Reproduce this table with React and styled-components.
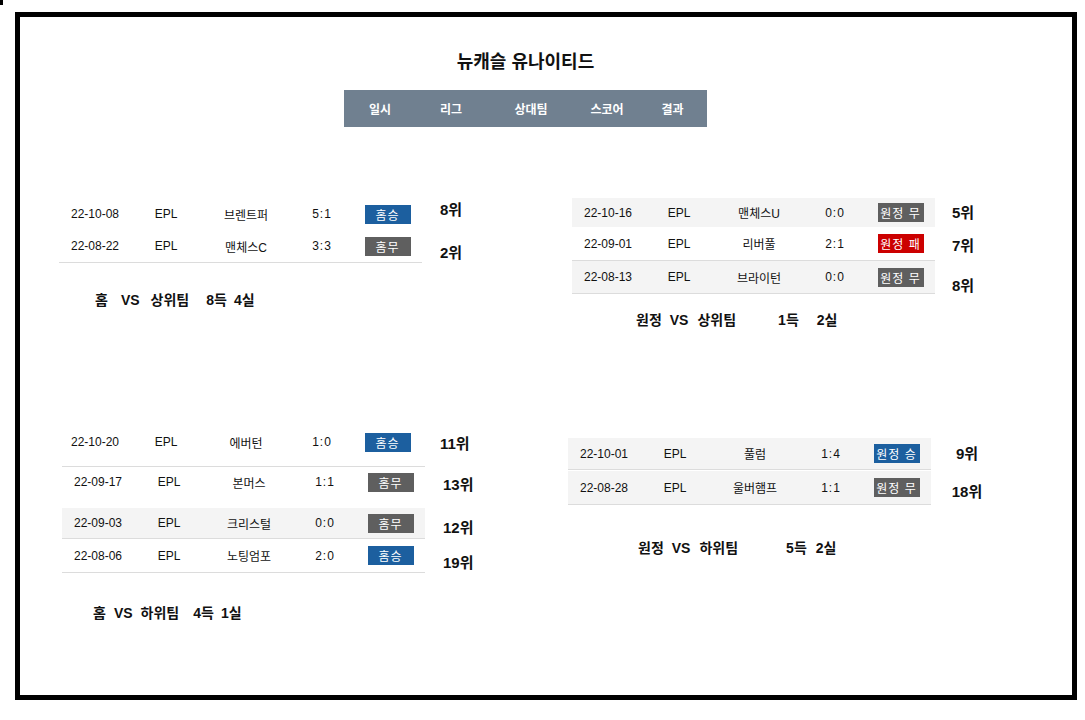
import styled, { createGlobalStyle } from "styled-components";

const GlobalStyle = createGlobalStyle`
    body {
        margin: 0;
        background: #fff;
        font-family: "Liberation Sans", "Noto Sans CJK KR", sans-serif;
        color: #111;
    }
`;

const COLS = "72px 70px 90px 62px 69px";

const Corner = styled.div`
    width: 3px;
    height: 5px;
    background: #000;
`;

const Frame = styled.div`
    box-sizing: border-box;
    width: 1062px;
    height: 688px;
    margin: 7px 0 0 15px;
    border: 5px solid #000;
`;

const Title = styled.h1`
    width: 363px;
    margin: 33px 0 0 324px;
    font-size: 18px;
    line-height: 24px;
    font-weight: 700;
    text-align: center;
`;

const HeaderBar = styled.div`
    display: grid;
    grid-template-columns: ${COLS};
    align-items: center;
    width: 363px;
    height: 37px;
    margin: 16px 0 0 324px;
    background: #708090;
    color: #fff;
    font-size: 12px;
    font-weight: 700;
    text-align: center;
`;

const Columns = styled.div`
    display: grid;
    grid-template-columns: 526px 526px;
`;

const Column = styled.div`
    display: flex;
    flex-direction: column;
`;

const Block = styled.section`
    margin: ${({ $top }) => $top}px 0 0 ${({ $left }) => $left}px;
`;

const Row = styled.div`
    display: flex;
    align-items: center;
    margin: ${({ $mt = 0 }) => $mt}px 0 0 ${({ $shift = 0 }) => $shift}px;
`;

const Cells = styled.div`
    box-sizing: content-box;
    display: grid;
    grid-template-columns: ${COLS};
    align-items: center;
    width: 363px;
    height: ${({ $h }) => $h}px;
    background: ${({ $gray }) => ($gray ? "#f4f4f4" : "transparent")};
    border-top: ${({ $topLine }) => ($topLine ? "1px solid #dcdcdc" : "none")};
    border-bottom: ${({ $line }) => ($line ? "1px solid #dcdcdc" : "none")};
    font-size: 12px;
    text-align: center;
    color: #111;
`;

const Cell = styled.span`
    white-space: nowrap;
`;

const Score = styled.span`
    letter-spacing: 1px;
    white-space: nowrap;
`;

const BADGE_COLORS = {
    win: "#1c5f9f",
    draw: "#5f5f5f",
    lose: "#cc0000",
};

const Badge = styled.span`
    justify-self: center;
    display: inline-flex;
    align-items: center;
    justify-content: center;
    width: 46px;
    height: 19px;
    background: ${({ $type }) => BADGE_COLORS[$type]};
    color: #fff;
    font-size: 12px;
    letter-spacing: 1px;
    white-space: nowrap;
`;

const Rank = styled.span`
    width: ${({ $w }) => $w}px;
    margin: ${({ $dy = 0 }) => $dy}px 0 ${({ $dy = 0 }) => -$dy}px ${({ $gap }) => $gap}px;
    font-size: 15px;
    font-weight: 700;
    text-align: ${({ $center }) => ($center ? "center" : "left")};
    white-space: nowrap;
`;

const Summary = styled.p`
    display: flex;
    margin: ${({ $mt }) => $mt}px 0 0 ${({ $pl }) => $pl}px;
    font-size: 14px;
    line-height: 20px;
    font-weight: 700;
    white-space: nowrap;
`;

const Part = styled.span`
    margin-left: ${({ $ml = 0 }) => $ml}px;
`;

const BLOCKS = {
    homeTop: {
        top: 71, left: 39, rankGap: 18, rankW: 40,
        rows: [
            { date: "22-10-08", team: "브렌트퍼", score: "5:1", badge: "홈승", type: "win", rank: "8위", h: 32, dy: -6 },
            { date: "22-08-22", team: "맨체스C", score: "3:3", badge: "홈무", type: "draw", rank: "2위", h: 32, line: true, dy: 5 },
        ],
        summary: { mt: 27, pl: 36, parts: [["홈", 0], ["VS", 13], ["상위팀", 11], ["8득", 17], ["4실", 7]] },
    },
    homeBottom: {
        top: 108, left: 39, rankGap: 18, rankW: 40,
        rows: [
            { date: "22-10-20", team: "에버턴", score: "1:0", badge: "홈승", type: "win", rank: "11위", h: 48, dy: 0 },
            { date: "22-09-17", team: "본머스", score: "1:1", badge: "홈무", type: "draw", rank: "13위", h: 30, topLine: true, shift: 3, dy: 2 },
            { date: "22-09-03", team: "크리스털", score: "0:0", badge: "홈무", type: "draw", rank: "12위", h: 30, gray: true, line: true, shift: 3, mt: 11, dy: 3 },
            { date: "22-08-06", team: "노팅엄포", score: "2:0", badge: "홈승", type: "win", rank: "19위", h: 33, line: true, shift: 3, dy: 5 },
        ],
        summary: { mt: 30, pl: 34, parts: [["홈", 0], ["VS", 8], ["하위팀", 8], ["4득", 14], ["1실", 7]] },
    },
    awayTop: {
        top: 71, left: 26, rankGap: 17, rankW: 40,
        rows: [
            { date: "22-10-16", team: "맨체스U", score: "0:0", badge: "원정 무", type: "draw", rank: "5위", h: 29, gray: true, dy: -1 },
            { date: "22-09-01", team: "리버풀", score: "2:1", badge: "원정 패", type: "lose", rank: "7위", h: 33, line: true, dy: 0 },
            { date: "22-08-13", team: "브라이턴", score: "0:0", badge: "원정 무", type: "draw", rank: "8위", h: 32, gray: true, line: true, dy: 7 },
        ],
        summary: { mt: 16, pl: 64, parts: [["원정", 0], ["VS", 8], ["상위팀", 9], ["1득", 42], ["2실", 18]] },
    },
    awayBottom: {
        top: 108, left: 22, rankGap: 16, rankW: 40, center: true,
        rows: [
            { date: "22-10-01", team: "풀럼", score: "1:4", badge: "원정 승", type: "win", rank: "9위", h: 31, gray: true, line: true, dy: -2 },
            { date: "22-08-28", team: "울버햄프", score: "1:1", badge: "원정 무", type: "draw", rank: "18위", h: 33, gray: true, line: true, mt: 1, dy: 2 },
        ],
        summary: { mt: 33, pl: 70, parts: [["원정", 0], ["VS", 8], ["하위팀", 9], ["5득", 48], ["2실", 9]] },
    },
};

const MatchBlock = ({ data }) => (
    <Block $top={data.top} $left={data.left}>
        {data.rows.map((r) => (
            <Row key={r.date} $mt={r.mt} $shift={r.shift}>
                <Cells $h={r.h} $gray={r.gray} $line={r.line} $topLine={r.topLine}>
                    <Cell>{r.date}</Cell>
                    <Cell>EPL</Cell>
                    <Cell>{r.team}</Cell>
                    <Score>{r.score}</Score>
                    <Badge $type={r.type}>{r.badge}</Badge>
                </Cells>
                <Rank $gap={data.rankGap} $w={data.rankW} $dy={r.dy} $center={data.center}>{r.rank}</Rank>
            </Row>
        ))}
        <Summary $mt={data.summary.mt} $pl={data.summary.pl}>
            {data.summary.parts.map(([text, ml]) => (
                <Part key={text} $ml={ml}>{text}</Part>
            ))}
        </Summary>
    </Block>
);

export default function App() {
    return (
        <>
            <GlobalStyle />
            <Corner />
            <Frame>
                <Title>뉴캐슬 유나이티드</Title>
                <HeaderBar>
                    <span>일시</span>
                    <span>리그</span>
                    <span>상대팀</span>
                    <span>스코어</span>
                    <span>결과</span>
                </HeaderBar>
                <Columns>
                    <Column>
                        <MatchBlock data={BLOCKS.homeTop} />
                        <MatchBlock data={BLOCKS.homeBottom} />
                    </Column>
                    <Column>
                        <MatchBlock data={BLOCKS.awayTop} />
                        <MatchBlock data={BLOCKS.awayBottom} />
                    </Column>
                </Columns>
            </Frame>
        </>
    );
}
